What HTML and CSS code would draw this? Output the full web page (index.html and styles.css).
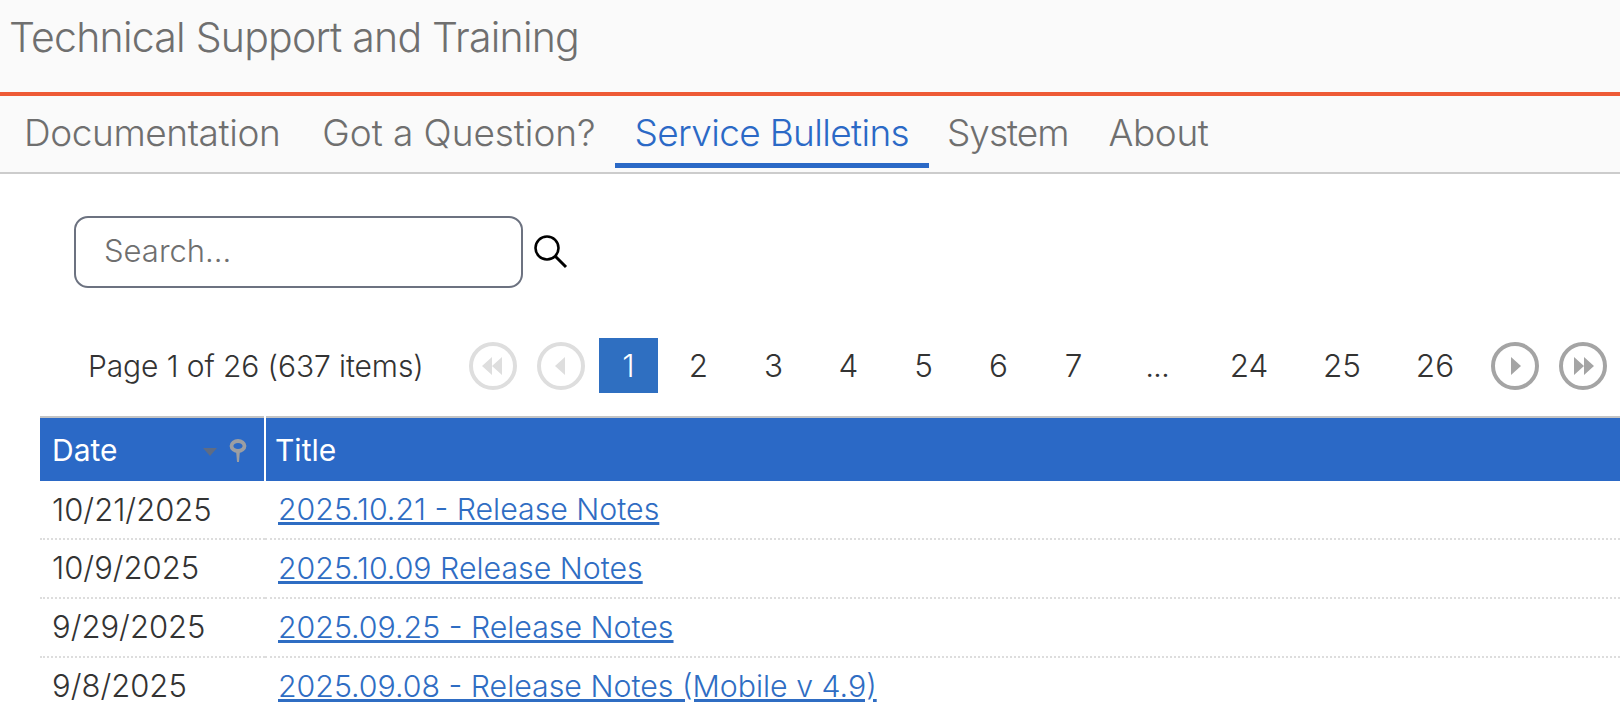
FILE: index.html
```html
<!DOCTYPE html>
<html lang="en">
<head>
<meta charset="utf-8">
<title>Technical Support and Training</title>
<link rel="stylesheet" href="styles.css">
</head>
<body>
<header class="topbar"><h1 class="title">Technical Support and Training</h1></header>
<nav class="tabs">
  <a class="tab tab-docs">Documentation</a>
  <a class="tab tab-question">Got a Question?</a>
  <a class="tab active">Service Bulletins</a>
  <a class="tab tab-system">System</a>
  <a class="tab">About</a>
</nav>
<main class="content">
  <div class="search">
    <input class="search-input" type="text" placeholder="Search...">
    <svg class="search-icon" viewBox="0 0 36 36" width="36" height="36"><circle cx="15" cy="15" r="11.5" fill="none" stroke="#000" stroke-width="2.6"/><path d="M23.5 23.5L34 34" stroke="#000" stroke-width="3" fill="none"/></svg>
  </div>
  <div class="pager">
    <span class="summary">Page 1 of 26 (637 items)</span>
    <div class="pages">
      <svg class="round off" viewBox="0 0 48 48" width="48" height="48"><circle cx="24" cy="24" r="22" class="ring"/><path d="M23 15v18l-10-9zM33 15v18l-10-9z" class="arrow"/></svg>
      <svg class="round off prev" viewBox="0 0 48 48" width="48" height="48"><circle cx="24" cy="24" r="22" class="ring"/><path d="M28 15v18l-10-9z" class="arrow"/></svg>
      <a class="page current">1</a>
      <a class="page">2</a>
      <a class="page">3</a>
      <a class="page">4</a>
      <a class="page">5</a>
      <a class="page">6</a>
      <a class="page">7</a>
      <a class="page dots">...</a>
      <a class="page wide">24</a>
      <a class="page wide">25</a>
      <a class="page wide">26</a>
      <svg class="round next" viewBox="0 0 48 48" width="48" height="48"><circle cx="24" cy="24" r="22" class="ring"/><path d="M20 15v18l10-9z" class="arrow"/></svg>
      <svg class="round" viewBox="0 0 48 48" width="48" height="48"><circle cx="24" cy="24" r="22" class="ring"/><path d="M15 15v18l10-9zM25 15v18l10-9z" class="arrow"/></svg>
    </div>
  </div>
  <table class="grid">
    <thead>
      <tr>
        <th class="col-date"><div class="head-cell"><span>Date</span><span class="head-tools"><i class="sort"></i><svg class="pin" viewBox="0 0 18 24" width="18" height="24"><ellipse cx="9" cy="7" rx="6.5" ry="5" fill="none" stroke="#9c9ea2" stroke-width="3.8"/><path d="M7 11h4l-1 12H8z" fill="#9c9ea2"/></svg></span></div></th>
        <th class="col-title">Title</th>
      </tr>
    </thead>
    <tbody>
      <tr><td class="date">10/21/2025</td><td class="name"><a class="link">2025.10.21 - Release Notes</a></td></tr>
      <tr><td class="date">10/9/2025</td><td class="name"><a class="link">2025.10.09 Release Notes</a></td></tr>
      <tr><td class="date">9/29/2025</td><td class="name"><a class="link">2025.09.25 - Release Notes</a></td></tr>
      <tr><td class="date">9/8/2025</td><td class="name"><a class="link">2025.09.08 - Release Notes (Mobile v 4.9)</a></td></tr>
    </tbody>
  </table>
</main>
</body>
</html>
```
FILE: styles.css
```css
* { box-sizing: border-box; }
html, body { margin: 0; padding: 0; height: 712px; overflow: hidden; background: #fff; }
body { font-family: Inter, "Liberation Sans", sans-serif; color: #333; }
.topbar { height: 96px; background: #fafafa; border-bottom: 4px solid #ee5a36; padding: 0 9px; display: flex; align-items: center; }
.title { margin: 0 0 18px; font-size: 41px; font-weight: 300; color: #6f6f6f; letter-spacing: -0.77px; white-space: nowrap; }
.tabs { height: 78px; background: #fafafa; border-bottom: 2px solid #ccc; display: flex; padding-left: 4px; }
.tab { height: 72px; padding: 5px 20px 0; border-bottom: 5px solid transparent; display: flex; align-items: center; font-size: 37px; font-weight: 300; color: #6f6f6f; letter-spacing: -0.4px; white-space: nowrap; }
.tab-docs { margin-right: 2px; }
.tab-question { letter-spacing: -0.05px; }
.tab-system { letter-spacing: -1px; padding-left: 18px; }
.tab.active { color: #2b69c6; border-bottom-color: #2b69c6; letter-spacing: -0.65px; padding-left: 19px; }
.content { padding: 0 0 0 40px; }
.search { display: flex; align-items: center; padding: 42px 0 0 34px; gap: 9px; }
.search-input { width: 449px; height: 72px; border: 2px solid #6c7280; border-radius: 14px; padding: 0 28px 3px; font: 300 31px Inter, sans-serif; color: #6f6f6f; background: #fff; outline: none; }
.search-input::placeholder { color: #6f6f6f; opacity: 1; }
.search-icon { flex: none; margin-bottom: 3px; }
.pager { display: flex; align-items: center; height: 55px; margin-top: 50px; padding-left: 48px; white-space: nowrap; }
.summary { font-size: 30px; font-weight: 300; width: 381px; flex: none; color: #333; letter-spacing: -0.1px; }
.pages { display: flex; align-items: center; }
.round { flex: none; margin-right: 20px; filter: blur(0.5px); }
.round.prev { margin-right: 14px; }
.round.next { margin-left: 2px; }
.ring { fill: #fff; stroke: #a4a4a4; stroke-width: 4; }
.arrow { fill: #a4a4a4; }
.off .ring { stroke: #dedede; }
.off .arrow { fill: #dedede; }
.page { width: 59px; height: 55px; margin-right: 16px; display: flex; align-items: center; justify-content: center; font-size: 31.5px; font-weight: 300; color: #333; }
.page.current { background: #2f6fc1; color: #fff; margin-right: 11px; }
.page.dots { width: 70px; margin-left: 3px; margin-right: 18px; letter-spacing: -1px; }
.page.wide { width: 78px; margin-right: 15px; }
.grid { width: 100%; margin-top: 23px; border-collapse: collapse; border-top: 2px solid #c4c4c4; table-layout: fixed; }
.grid th { height: 64px; background: #2b69c6; color: #fff; font-size: 30px; font-weight: 400; text-align: left; padding: 0 17px 0 12px; }
.grid th.col-date { width: 225px; border-right: 2px solid #fff; }
.grid th.col-title { padding-left: 9px; }
.head-cell { display: flex; justify-content: space-between; align-items: center; }
.head-tools { display: flex; align-items: center; gap: 12px; margin-top: 3px; }
.sort { width: 0; height: 0; border-left: 7px solid transparent; border-right: 7px solid transparent; border-top: 8px solid #5f6c84; margin-top: 2px; filter: blur(0.5px); }
.pin { filter: blur(0.5px); }
.grid td { height: 59px; padding: 0 12px 2px; font-weight: 300; border-bottom: 2px dotted #ddd; color: #333; white-space: nowrap; }
.grid tbody tr:first-child td { height: 58px; padding-bottom: 1px; }
.grid td.date { font-size: 31px; }
.grid td.name { font-size: 30.3px; padding-left: 13px; }
.link { color: #2f6dc3; text-decoration: underline; text-decoration-thickness: 3px; }
```
